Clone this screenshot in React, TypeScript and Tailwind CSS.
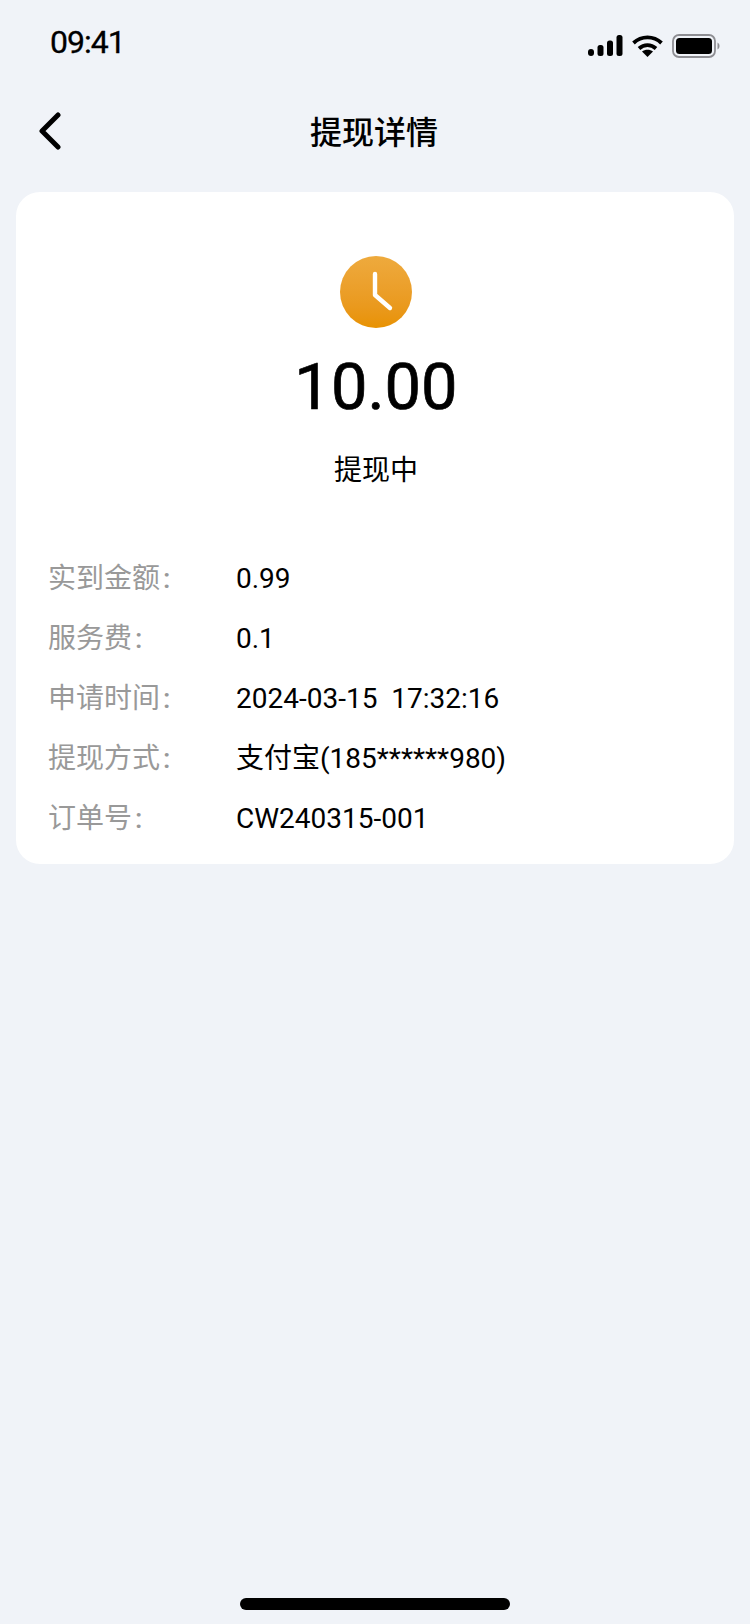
const font = "font-['Roboto','Noto_Sans_CJK_SC',sans-serif]";

const rows: [string, string][] = [
  ['实到金额', '0.99'],
  ['服务费', '0.1'],
  ['申请时间', '2024-03-15\u00a0\u00a017:32:16'],
  ['提现方式', '支付宝(185******980)'],
  ['订单号', 'CW240315-001'],
];

function StatusIcons() {
  return (
    <div className="flex items-center gap-[9px]">
      <svg width="35" height="22" viewBox="0 0 35 22" fill="#000">
        <rect x="0" y="14" width="6" height="7" rx="3" />
        <rect x="9.5" y="10" width="6" height="11" rx="2.5" />
        <rect x="19" y="5.5" width="6" height="15.5" rx="2.5" />
        <rect x="28.5" y="0" width="6" height="21" rx="2.5" />
      </svg>
      <svg width="31" height="22" viewBox="0 0 31 22" fill="none" stroke="#000" strokeWidth="3.8">
        <path d="M1.5 8 C9.5 0.5 21.5 0.5 29.5 8" />
        <path d="M7 13.5 C12 9 19 9 24 13.5" />
        <path d="M15.5 22 L10 16.6 C13 14 18 14 21 16.6 Z" fill="#000" stroke="none" />
      </svg>
      <svg width="48" height="24" viewBox="0 0 48 24" fill="none">
        <rect x="1" y="1" width="42" height="22" rx="6" stroke="#8e8e93" strokeWidth="1.8" />
        <rect x="4" y="4" width="36" height="16" rx="3.5" fill="#000" />
        <path d="M45.5 8.5 C47 9.5 47.5 10.5 47.5 12 C47.5 13.5 47 14.5 45.5 15.5 Z" fill="#8e8e93" />
      </svg>
    </div>
  );
}

export default function App() {
  return (
    <div className={`${font} flex h-[1624px] w-[750px] flex-col overflow-hidden bg-[#f0f3f8] text-black`}>
      <div className="flex h-[88px] items-start justify-between pl-[50px] pr-[30px] pt-[22px]">
        <span className="text-[32px] leading-[40px] tracking-[-1px] [-webkit-text-stroke:0.3px_#000]">09:41</span>
        <div className="pt-[12px]">
          <StatusIcons />
        </div>
      </div>
      <div className="relative flex h-[88px] items-center justify-center pr-[2px] pt-[2px]">
        <svg className="absolute left-[38px] top-[24px]" width="24" height="38" viewBox="0 0 24 38" fill="none" stroke="#000" strokeWidth="5" strokeLinecap="round" strokeLinejoin="round">
          <path d="M20 3 L4 19 L20 35" />
        </svg>
        <span className="text-[32px] font-medium leading-[44px]">提现详情</span>
      </div>
      <div className="mx-4 mt-4 flex h-[672px] flex-col items-center rounded-[24px] bg-white pt-[64px]">
        <div className="ml-[2px] flex h-[72px] w-[72px] items-center justify-center rounded-full bg-gradient-to-b from-[#eeaa3d] to-[#e89200]">
          <svg width="72" height="72" viewBox="0 0 72 72" fill="none" stroke="#fff" strokeWidth="4.4" strokeLinecap="round" strokeLinejoin="round">
            <path d="M35 18 L35 39 L50 52" />
          </svg>
        </div>
        <div className="ml-[2px] mt-[19px] text-[65px] leading-[80px] [-webkit-text-stroke:0.7px_#000]">10.00</div>
        <div className="mt-[24px] ml-[2px] text-[28px] leading-[40px]">提现中</div>
        <div className="mt-[68px] flex w-full flex-col gap-[20px] pl-[32px]">
          {rows.map(([label, value]) => (
            <div key={label} className="flex text-[28px] leading-[40px]">
              <span className="w-[188px] shrink-0 text-[#999999]">
                {label}
                <span className="ml-[3px] font-medium">:</span>
              </span>
              <span>{value}</span>
            </div>
          ))}
        </div>
      </div>
      <div className="mt-auto mb-[14px] flex justify-center">
        <div className="h-[12px] w-[270px] rounded-full bg-black" />
      </div>
    </div>
  );
}
